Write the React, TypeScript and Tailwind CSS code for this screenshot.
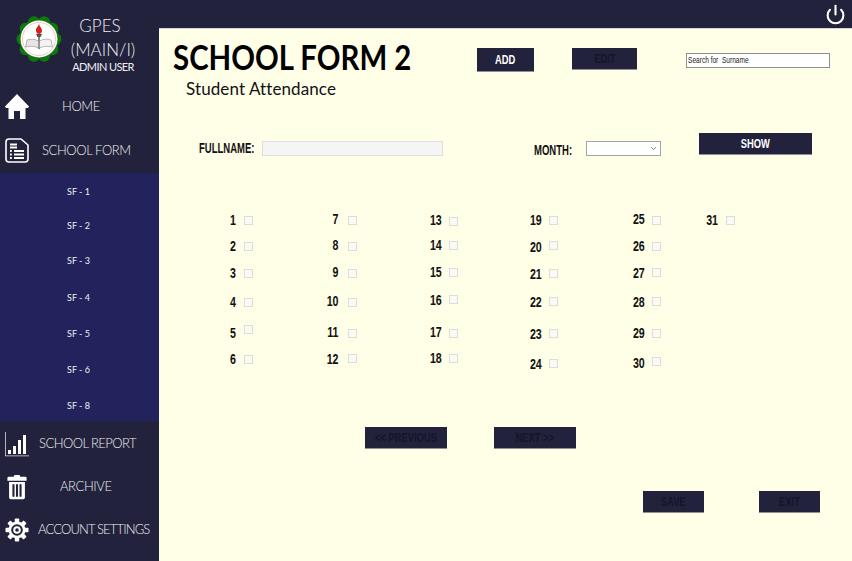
import React from 'react';
import { Power, ChevronDown } from 'lucide-react';

const gothic = 'font-["Lato","Open_Sans",sans-serif]';
const narrow = 'font-["Liberation_Sans",sans-serif]';

const Logo = () => {
  const bumps = Array.from({ length: 10 }, (_, i) => (i * Math.PI) / 5);
  return (
    <svg width="46" height="48" viewBox="0 0 46 48" className="shrink-0">
      <circle cx="23" cy="24" r="20" fill="#0b7a0b" />
      {bumps.map((a, i) => (
        <circle key={i} cx={23 + 16.5 * Math.cos(a)} cy={24 + 17.5 * Math.sin(a)} r="6" fill="#0b7a0b" />
      ))}
      <circle cx="23" cy="24" r="18.5" fill="#fff" />
      <circle cx="23" cy="24" r="16.5" fill="none" stroke="#f0a0a0" strokeWidth="0.6" />
      <path d="M23 9c-1 3-3.500 4-3 7 .3 2 1.600 3 3 3s2.800-1 3-3c.4-3-2-3.500-3-7z" fill="#d4231c" />
      <path d="M20 19h6l-1.500 3h-3z" fill="#5a4a4a" />
      <rect x="22.300" y="20" width="1.400" height="14" fill="#555" />
      <path d="M11 25c4-1.500 8-1 11.500 1v7c-3.500-1.800-8-2.200-13-1z" fill="#e9e4e4" stroke="#777" strokeWidth="0.5" />
      <path d="M35 25c-4-1.500-8-1-11.500 1v7c3.500-1.800 8-2.200 13-1z" fill="#f5f2f2" stroke="#777" strokeWidth="0.5" />
    </svg>
  );
};

const HomeIcon = () => (
  <svg width="24" height="25" viewBox="0 0 24 25" fill="#fff">
    <path d="M12 0 24 12.500l-1 1.500h-2.500v11H15v-8H9v8H3.500V14H1L0 12.500z" />
  </svg>
);

const FormIcon = () => (
  <svg width="24" height="25" viewBox="0 0 24 25" fill="none" stroke="#fff">
    <path d="M4 1h12l7 6v14a3 3 0 0 1-3 3H4a3 3 0 0 1-3-3V4a3 3 0 0 1 3-3z" strokeWidth="1.600" />
    <path d="M5 6.500h7M5 9.500h7" strokeWidth="1.800" />
    <path d="M5 13h1.800M5 16.500h1.800M5 20h1.800M9 13h10M9 16.500h10M9 20h10" strokeWidth="2" />
  </svg>
);

const ReportIcon = () => (
  <svg width="24" height="25" viewBox="0 0 24 25" fill="#fff">
    <path d="M0 0h.8v23.500H24v.8H0z" fill="#ddd" />
    <rect x="3" y="18" width="3" height="4" />
    <rect x="8" y="14" width="3" height="8" />
    <rect x="13" y="8" width="3" height="14" />
    <rect x="18" y="3" width="3" height="19" />
  </svg>
);

const TrashIcon = () => (
  <svg width="20" height="29" viewBox="0 0 24 30" fill="#fff">
    <path d="M9 0h6l1 2h6a1.500 1.500 0 0 1 1.500 1.500V7H.5V3.500A1.500 1.500 0 0 1 2 2h6z" />
    <path fillRule="evenodd" d="M2.500 8.500h19V27a2 2 0 0 1-2 2h-15a2 2 0 0 1-2-2zM6.500 11v15h2.500V11zm4.250 0v15h2.500V11zm4.250 0v15h2.500V11z" />
  </svg>
);

const GearIcon = () => {
  const teeth = [0, 45, 90, 135, 180, 225, 270, 315];
  return (
    <svg width="24" height="24" viewBox="0 0 24 24">
      {teeth.map(t => (
        <rect key={t} x="9.800" y="0.500" width="4.400" height="5" rx="0.800" fill="#fff" transform={`rotate(${t} 12 12)`} />
      ))}
      <circle cx="12" cy="12" r="8.500" fill="#fff" />
      <circle cx="12" cy="12" r="5.800" fill="#22223c" />
      <circle cx="12" cy="12" r="3.800" fill="#fff" />
      <circle cx="12" cy="12" r="1.800" fill="#22223c" />
    </svg>
  );
};

const navTop = [
  { label: 'HOME', icon: <HomeIcon />, cls: 'h-[43px]', text: 'ml-[33px] tracking-[-0.4px]' },
  { label: 'SCHOOL FORM', icon: <FormIcon />, cls: 'h-[45px]', text: 'ml-[13px] tracking-[-0.4px]' },
];

const navBottom = [
  { label: 'SCHOOL REPORT', icon: <ReportIcon />, cls: 'h-[46px]', text: 'ml-[10px] tracking-[-0.55px]' },
  { label: 'ARCHIVE', icon: <TrashIcon />, cls: 'h-[40px]', text: 'ml-[31px] tracking-[-0.4px]' },
  { label: 'ACCOUNT SETTINGS', icon: <GearIcon />, cls: 'h-[46px]', text: 'ml-[9px] tracking-[-0.85px]' },
];

const subItems = [
  { label: 'SF - 1', y: 192 },
  { label: 'SF - 2', y: 226 },
  { label: 'SF - 3', y: 261 },
  { label: 'SF - 4', y: 298 },
  { label: 'SF - 5', y: 334 },
  { label: 'SF - 6', y: 370 },
  { label: 'SF - 8', y: 406 },
];

type Day = { n: number; y: number; labelY: number };

const col = (start: number, cb: number[], lb: number[]): Day[] =>
  cb.map((y, i) => ({ n: start + i, y, labelY: lb[i] }));

const columns = [
  { width: 'w-[104px]', dx: 0, days: col(1, [220, 246, 273, 302, 329, 359], [220, 246, 273, 302, 333, 359]) },
  { width: 'w-[101px]', dx: -2, days: col(7, [220, 246, 273, 302, 333, 358], [219, 245, 272, 301, 332, 359]) },
  { width: 'w-[100px]', dx: 1, days: col(13, [221, 245, 272, 299, 333, 358], [220, 245, 272, 300, 332, 358]) },
  { width: 'w-[103px]', dx: 1, days: col(19, [220, 245, 273, 301, 333, 363], [220, 247, 274, 302, 334, 364]) },
  { width: 'w-[74px]', dx: 1, days: col(25, [220, 246, 272, 301, 333, 361], [219, 246, 273, 302, 333, 363]) },
  { width: 'w-[60px]', dx: 0, days: col(31, [220], [220]) },
];

const Btn = ({ label, cls, light }: { label: string; cls: string; light?: boolean }) => (
  <button
    className={`${cls} ${narrow} shrink-0 bg-[#22223c] border-b border-[#8f8f9c] text-[13px] font-bold flex items-center justify-center whitespace-nowrap overflow-hidden ${
      light ? 'text-white' : 'text-[#15152a]'
    }`}
  >
    <span className="inline-block scale-x-[0.72]">{label}</span>
  </button>
);

export default function App() {
  return (
    <div className="w-[852px] h-[561px] flex overflow-hidden bg-[#22223c]">
      <aside className={`w-[159px] shrink-0 flex flex-col text-[#eeeef2] ${gothic}`}>
        <div className="h-[85px] flex pt-[15px] pl-[16px]">
          <Logo />
          <div className="w-[74px] ml-[1px] flex flex-col items-center font-light">
            <span className="text-[17px] leading-[22px]">GPES</span>
            <span className="text-[17px] leading-[22px] mt-[2px] ml-[6px]">(MAIN/I)</span>
            <span className="text-[11px] leading-[14px] -mt-[1px] tracking-[-0.6px] ml-[6px] whitespace-nowrap font-normal">ADMIN USER</span>
          </div>
        </div>

        {navTop.map(item => (
          <div key={item.label} className={`${item.cls} flex items-center pl-[5px]`}>
            <span className="w-[24px] flex justify-center">{item.icon}</span>
            <span className={`${item.text} text-[13px] font-light whitespace-nowrap`}>{item.label}</span>
          </div>
        ))}

        <div className="h-[248px] shrink-0 bg-[#22235c] flex flex-col items-center">
          {subItems.map((s, i) => (
            <span
              key={s.label}
              className="h-[16px] leading-[16px] text-[9px] -ml-[2px]"
              style={{ marginTop: i === 0 ? s.y - 173 - 8 : s.y - subItems[i - 1].y - 16 }}
            >
              {s.label}
            </span>
          ))}
        </div>

        {navBottom.map(item => (
          <div key={item.label} className={`${item.cls} flex items-center pl-[5px] shrink-0`}>
            <span className="w-[24px] flex justify-center">{item.icon}</span>
            <span className={`${item.text} text-[13px] font-light whitespace-nowrap`}>{item.label}</span>
          </div>
        ))}
      </aside>

      <div className="flex-1 flex flex-col min-w-0">
        <header className="h-[29px] shrink-0 flex items-center justify-end pr-[6px] text-white">
          <Power size={21} strokeWidth={2.4} />
        </header>

        <main className="flex-1 bg-[#ffffe8] flex flex-col border-t border-[#d5d5d5] -mt-px">
          <div className="h-[104px] shrink-0 flex items-start">
            <div className="ml-[14px] w-[304px] shrink-0">
              <h1 className={`${gothic} text-[35px] font-bold leading-[38px] mt-[8px] text-black whitespace-nowrap origin-left scale-x-[0.84]`}>SCHOOL FORM 2</h1>
              <p className={`${gothic} text-[17px] leading-[20px] ml-[13px] mt-[4px] tracking-[0.1px] text-[#111]`}>Student Attendance</p>
            </div>
            <Btn label="ADD" cls="w-[57px] h-[24px] mt-[19px]" light />
            <Btn label="EDIT" cls="w-[65px] h-[22px] mt-[19px] ml-[38px]" />
            <div className="w-[144px] h-[15px] mt-[24px] ml-[49px] bg-white border border-[#8f8f8f] text-[9px] leading-[13px] px-[1px] font-['Liberation_Sans',sans-serif] text-[#222] whitespace-nowrap">
              <span className="inline-block origin-left scale-x-[0.73]">Search for&nbsp; Surname</span>
            </div>
          </div>

          <div className="h-[23px] shrink-0 flex items-end">
            <span className={`${narrow} ml-[40px] w-[63px] shrink-0 text-[14px] font-bold leading-[15px] text-[#111] whitespace-nowrap origin-left scale-x-[0.68]`}>FULLNAME:</span>
            <div className="w-[181px] h-[15px] shrink-0 bg-[#f5f5f5] border border-[#dedede]" />
            <span className={`${narrow} ml-[91px] w-[52px] shrink-0 text-[14px] font-bold leading-[15px] -mb-[2px] text-[#111] whitespace-nowrap origin-left scale-x-[0.68]`}>MONTH:</span>
            <div className="w-[75px] h-[15px] shrink-0 bg-white border border-[#a5a5a5] flex items-center justify-end pr-[2px]">
              <ChevronDown size={9} className="text-[#555]" />
            </div>
            <Btn label="SHOW" cls="w-[113px] h-[22px] ml-[38px] self-start" light />
          </div>

          <div className="h-[271px] shrink-0 flex pl-[57px]">
            {columns.map(c => (
              <div key={c.days[0].n} className={`${c.width} shrink-0 flex flex-col`}>
                {c.days.map((d, i) => (
                  <div
                    key={d.n}
                    className="h-[9px] flex items-center shrink-0"
                    style={{ marginTop: i === 0 ? d.y - 156 - 4 : d.y - c.days[i - 1].y - 9 }}
                  >
                    <span
                      className={`${narrow} w-[20px] text-right text-[14px] font-bold leading-[9px] text-[#111] origin-right scale-x-[0.76]`}
                      style={{ transform: `translate(${c.dx}px, ${d.labelY - d.y}px)` }}
                    >
                      {d.n}
                    </span>
                    <span className="ml-[8px] w-[9px] h-[9px] bg-[#fbfbf4] border border-[#dcdcdc]" />
                  </div>
                ))}
              </div>
            ))}
          </div>

          <div className="h-[64px] shrink-0 flex items-start">
            <Btn label="<< PREVIOUS" cls="w-[82px] h-[22px] ml-[206px]" />
            <Btn label="NEXT >>" cls="w-[82px] h-[22px] ml-[47px]" />
          </div>

          <div className="flex items-start">
            <Btn label="SAVE" cls="w-[61px] h-[22px] ml-[484px]" />
            <Btn label="EXIT" cls="w-[61px] h-[22px] ml-[55px]" />
          </div>
        </main>
      </div>
    </div>
  );
}
